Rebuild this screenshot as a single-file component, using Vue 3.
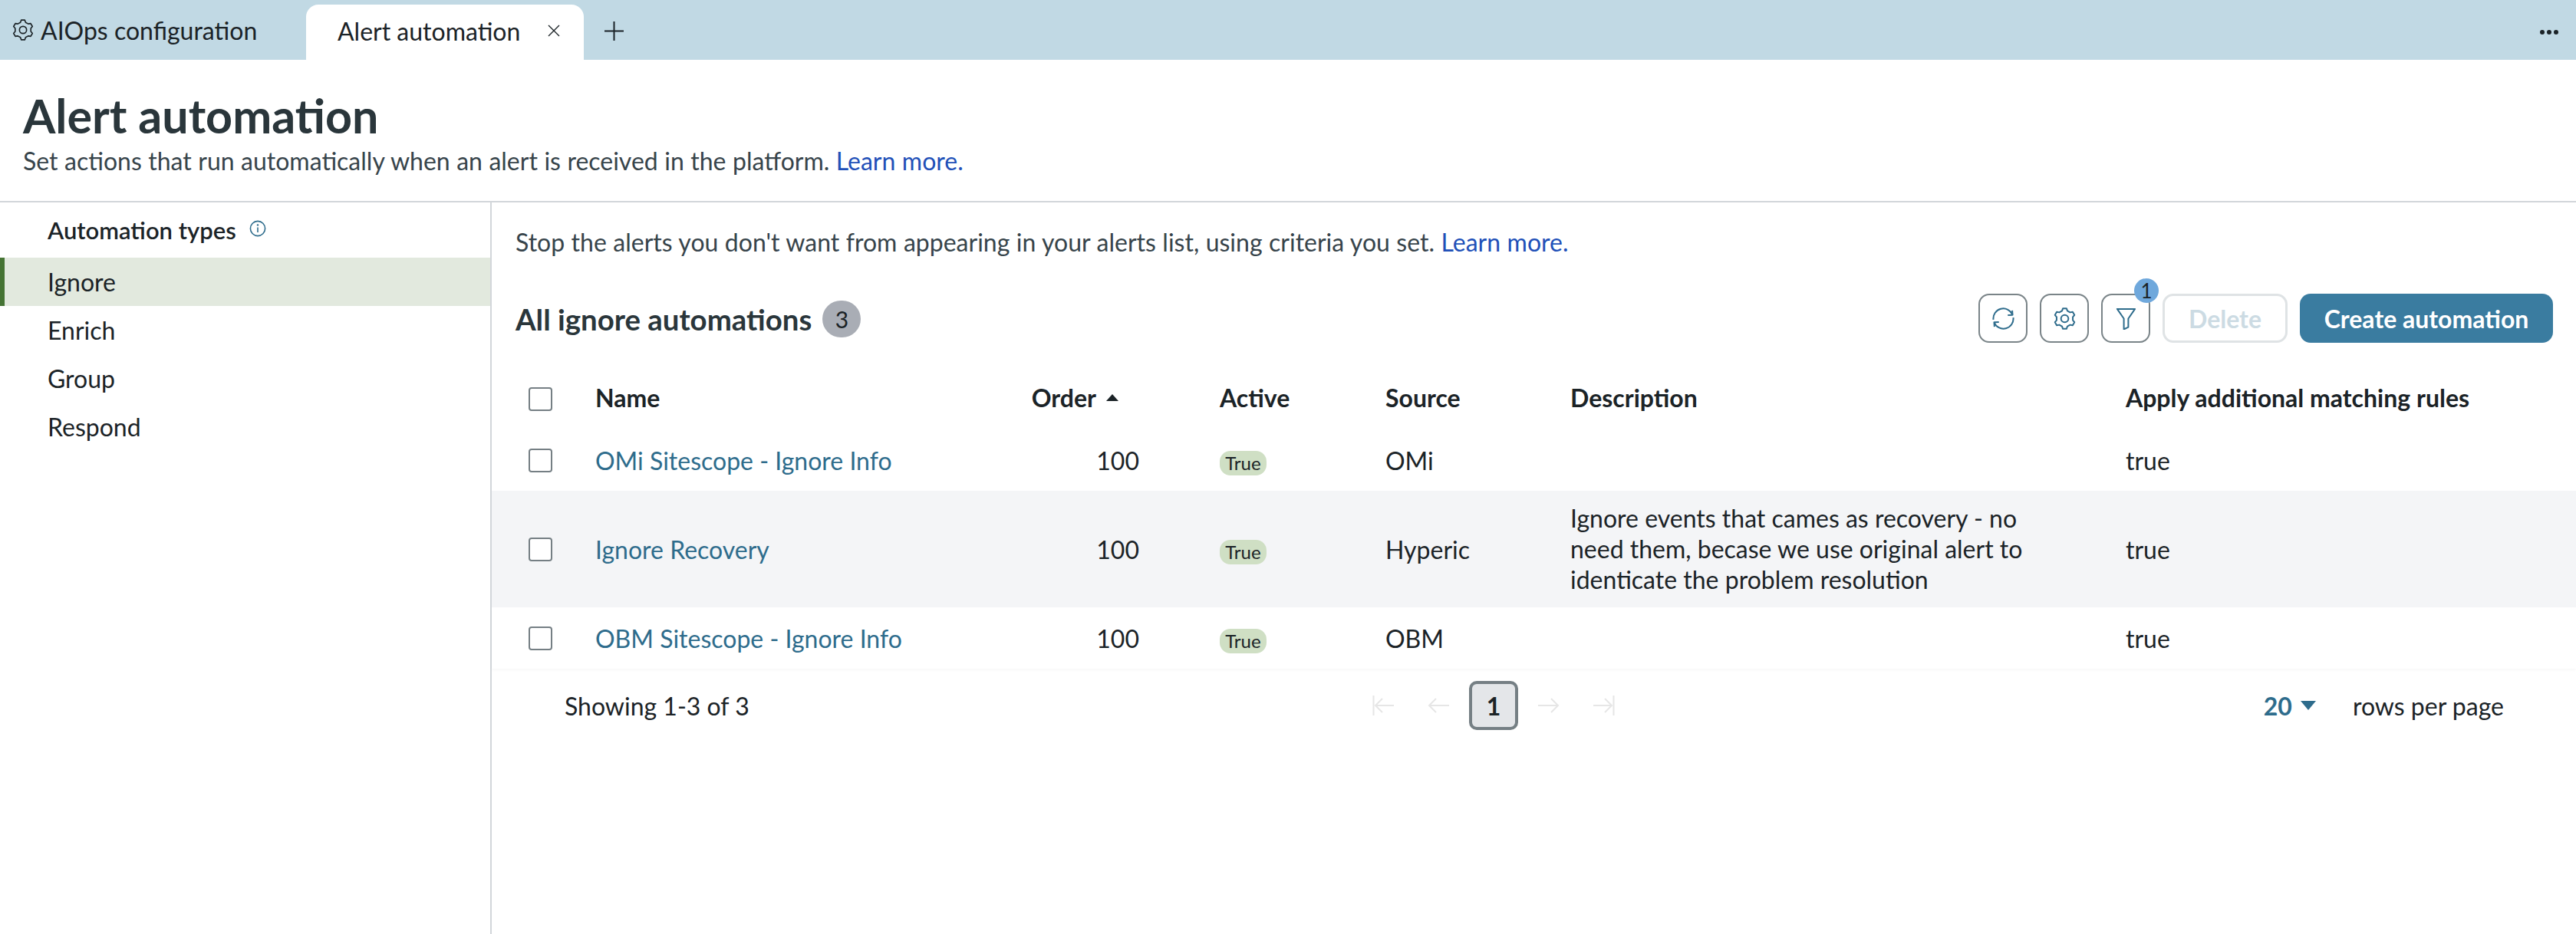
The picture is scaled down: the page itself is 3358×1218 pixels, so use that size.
<script setup>
const rows = [
  { name: 'OMi Sitescope - Ignore Info', source: 'OMi', desc: '' },
  { name: 'Ignore Recovery', source: 'Hyperic', desc: 'Ignore events that cames as recovery - no need them, becase we use original alert to identicate the problem resolution' },
  { name: 'OBM Sitescope - Ignore Info', source: 'OBM', desc: '' },
]
const types = ['Ignore', 'Enrich', 'Group', 'Respond']

function buildGear() {
  const pt = (deg, r) => {
    const a = (deg * Math.PI) / 180
    return (12 + r * Math.cos(a)).toFixed(2) + ' ' + (12 + r * Math.sin(a)).toFixed(2)
  }
  const parts = []
  for (let k = 0; k < 6; k++) {
    const c = k * 60 - 90
    parts.push(pt(c - 19, 8.9), pt(c - 10, 11.2), pt(c + 10, 11.2), pt(c + 19, 8.9))
  }
  return 'M' + parts.join('L') + 'Z'
}
const gear = buildGear()
</script>

<template>
  <div class="app">
    <div class="tabbar">
      <div class="home-tab">
        <svg class="tab-gear" viewBox="0 0 24 24"><path :d="gear" /><circle cx="12" cy="12" r="4" /></svg>
        <span>AIOps configuration</span>
      </div>
      <div class="tab">
        <span>Alert automation</span>
        <svg class="close" viewBox="0 0 18 18"><path d="M2 2l14 14M16 2L2 16" /></svg>
      </div>
      <svg class="plus" viewBox="0 0 25 25"><path d="M12.5 0v25M0 12.5h25" /></svg>
      <div class="dots"><i></i><i></i><i></i></div>
    </div>

    <header class="page-head">
      <h1>Alert automation</h1>
      <p>Set actions that run automatically when an alert is received in the platform. <a>Learn more.</a></p>
    </header>

    <div class="body">
      <aside class="side">
        <div class="side-title">
          <span>Automation types</span>
          <svg class="info" viewBox="0 0 22 22"><circle cx="11" cy="11" r="9.6" /><path d="M11 9.5v6.5" /><circle class="dot" cx="11" cy="6.4" r="1.2" /></svg>
        </div>
        <div v-for="(t, i) in types" :key="t" class="side-item" :class="{ active: i === 0 }">{{ t }}</div>
      </aside>

      <main class="main">
        <p class="intro">Stop the alerts you don't want from appearing in your alerts list, using criteria you set. <a>Learn more.</a></p>

        <div class="toolbar">
          <div class="heading">
            <h2>All ignore automations</h2>
            <span class="count">3</span>
          </div>
          <div class="actions">
            <button class="icon-btn">
              <svg viewBox="0 0 30 30"><path d="M1.6 16.500A13.400 13.400 0 0 1 27.400 10M28.400 13.500A13.400 13.400 0 0 1 2.600 20" /><path d="M27 4l.4 6-6.400.4M3 26l-.4-6 6.400-.4" /></svg>
            </button>
            <button class="icon-btn">
              <svg viewBox="0 0 24 24"><path :d="gear" /><circle cx="12" cy="12" r="4" /></svg>
            </button>
            <button class="icon-btn filter">
              <svg viewBox="0 0 28 30"><path d="M2 2h24L17 15v11.500l-6 3V15z" /></svg>
              <span class="badge">1</span>
            </button>
            <button class="delete">Delete</button>
            <button class="create">Create automation</button>
          </div>
        </div>

        <div class="table">
          <div class="row head">
            <div><span class="check"></span></div>
            <div>Name</div>
            <div class="order-head"><span>Order</span><i class="sort"></i></div>
            <div class="active-cell">Active</div>
            <div>Source</div>
            <div>Description</div>
            <div>Apply additional matching rules</div>
          </div>
          <div v-for="r in rows" :key="r.name" class="row">
            <div><span class="check"></span></div>
            <div class="link">{{ r.name }}</div>
            <div class="num">100</div>
            <div class="active-cell"><span class="pill">True</span></div>
            <div>{{ r.source }}</div>
            <div class="desc">{{ r.desc }}</div>
            <div>true</div>
          </div>
        </div>

        <div class="footer">
          <span class="showing">Showing 1-3 of 3</span>
          <div class="pager">
            <svg viewBox="0 0 28 26"><path d="M1.5 0v26M28 13H4M13 4l-9 9 9 9" /></svg>
            <svg viewBox="0 0 28 26"><path d="M28 13H2M11 4l-9 9 9 9" /></svg>
            <span class="page">1</span>
            <svg viewBox="0 0 28 26"><path d="M0 13h26M17 4l9 9-9 9" /></svg>
            <svg viewBox="0 0 28 26"><path d="M26.500 0v26M0 13h24M15 4l9 9-9 9" /></svg>
          </div>
          <div class="per-page">
            <span class="size">20<i></i></span>
            <span>rows per page</span>
          </div>
        </div>
      </main>
    </div>
  </div>
</template>

<style scoped>
.app {
  width: 3358px;
  height: 1218px;
  overflow: hidden;
  background: #fff;
  font-family: Lato, "Noto Sans", sans-serif;
  font-size: 32px;
  color: #1b2327;
  display: flex;
  flex-direction: column;
}
a { color: #2150b8; }

.tabbar {
  height: 78px;
  flex: none;
  background: #c1d9e4;
  display: flex;
  align-items: flex-end;
}
.home-tab {
  width: 399px;
  height: 78px;
  flex: none;
  display: flex;
  align-items: center;
  padding-left: 16px;
  gap: 9px;
  box-sizing: border-box;
}
.tab-gear { width: 28px; height: 28px; fill: none; stroke: #1b2327; stroke-width: 1.4; stroke-linejoin: round; }
.tab {
  width: 362px;
  height: 72px;
  flex: none;
  box-sizing: border-box;
  background: #fff;
  border-radius: 16px 16px 0 0;
  display: flex;
  align-items: center;
  padding: 0 30px 4px 41px;
  justify-content: space-between;
}
.close { width: 18px; height: 18px; fill: none; stroke: #1b2327; stroke-width: 1.4; }
.plus { width: 25px; height: 25px; margin: 0 0 25px 27px; fill: none; stroke: #1b2327; stroke-width: 2; }
.dots { margin: 0 23px 33px auto; display: flex; gap: 3px; }
.dots i { width: 6px; height: 6px; border-radius: 50%; background: #1b2327; }

.page-head {
  height: 186px;
  flex: none;
  box-sizing: border-box;
  padding: 33px 30px 0;
  border-bottom: 2px solid #d2d6da;
  color: #2a363b;
}
.page-head h1 { margin: 0; font-size: 61px; line-height: 80px; font-weight: 700; }
.page-head p { margin: 0; line-height: 38px; color: #37444b; word-spacing: 0.3px; }

.body { flex: 1; display: flex; min-height: 0; }
.side { width: 641px; flex: none; box-sizing: border-box; border-right: 2px solid #d2d6da; }
.side-title {
  height: 72px;
  display: flex;
  align-items: center;
  padding-left: 62px;
  gap: 17px;
  font-size: 31px;
  font-weight: 600;
  color: #1b2327;
}
.info { width: 22px; height: 22px; margin-top: -4px; fill: none; stroke: #2e6c8c; stroke-width: 1.6; }
.info .dot { fill: #2e6c8c; stroke: none; }
.side-item {
  height: 63px;
  line-height: 63px;
  padding-left: 62px;
  color: #1b2327;
}
.side-item.active {
  background: #e2e9de;
  box-shadow: inset 6px 0 0 #457434;
}

.main { flex: 1; min-width: 0; }
.intro { margin: 0; padding: 33px 0 0 31px; line-height: 38px; color: #37444b; word-spacing: 0.3px; }
.toolbar {
  margin-top: 48px;
  padding: 0 30px 0 31px;
  height: 64px;
  display: flex;
  align-items: center;
  justify-content: space-between;
}
.heading { display: flex; align-items: center; gap: 14px; margin-top: 2px; }
.heading h2 { margin: 0; font-size: 38.4px; font-weight: 700; color: #2a363b; }
.count {
  width: 50px;
  height: 48px;
  border-radius: 24px;
  background: #a9adb5;
  display: flex;
  align-items: center;
  justify-content: center;
  font-size: 30px;
}
.actions { display: flex; gap: 16px; }
button {
  font-family: inherit;
  font-size: 32px;
  height: 64px;
  box-sizing: border-box;
  border-radius: 14px;
  padding: 0;
}
.icon-btn {
  width: 64px;
  background: #fff;
  border: 2.5px solid #7a8488;
  position: relative;
  display: flex;
  align-items: center;
  justify-content: center;
}
.icon-btn svg { width: 29px; height: 29px; fill: none; stroke: #2e6c8c; stroke-width: 2; stroke-linejoin: round; }
.icon-btn svg * { vector-effect: non-scaling-stroke; }
.badge {
  position: absolute;
  top: -22px;
  right: -13px;
  width: 32px;
  height: 32px;
  border-radius: 50%;
  background: #6fa8dc;
  color: #1b2327;
  font-size: 26px;
  line-height: 32px;
  text-align: center;
}
.delete {
  width: 163px;
  background: #fff;
  border: 3px solid #dfe3e5;
  color: #ccdbe3;
  font-weight: 700;
}
.create {
  width: 330px;
  background: #3a7ca0;
  border: 0;
  color: #fff;
  font-weight: 700;
}

.table { margin-top: 33px; }
.row {
  display: grid;
  grid-template-columns: 135px 501px 208px 321px 241px 724px 1fr;
  align-items: center;
  min-height: 80px;
}
.row > div:first-child { padding-left: 48px; display: flex; }
.row:nth-child(3) { background: #f4f5f7; min-height: 152px; }
.row:last-child { box-shadow: 0 2px 3px rgba(0, 0, 0, 0.03); }
.head { font-weight: 700; }
.head > div:not(:first-child) { margin-top: -3px; }
.check {
  width: 31px;
  height: 31px;
  box-sizing: border-box;
  background: #fff;
  border: 2px solid #757f84;
  border-radius: 4px;
}
.link { color: #2e6c8c; }
.num { text-align: right; }
.order-head { display: flex; justify-content: flex-end; align-items: center; padding-right: 27px; gap: 13px; }
.sort { width: 0; height: 0; border: 8px solid transparent; border-top: 0; border-bottom: 9px solid #1b2327; }
.active-cell { padding-left: 105px; }
.pill {
  display: inline-block;
  width: 61px;
  height: 32px;
  margin-top: 6px;
  border-radius: 14px;
  background: #cfdfc4;
  font-size: 24px;
  line-height: 32px;
  text-align: center;
}
.desc { line-height: 40px; padding-right: 104px; }

.footer {
  height: 96px;
  display: flex;
  align-items: center;
  padding: 0 94px 0 95px;
}
.showing { width: 1053px; flex: none; }
.pager { display: flex; align-items: center; gap: 44px; }
.pager svg { width: 28px; height: 26px; fill: none; stroke: #e6e6e6; stroke-width: 2; margin: 0; }
.page {
  width: 64px;
  height: 64px;
  margin: 0 -18px;
  box-sizing: border-box;
  border: 4px solid #757f84;
  border-radius: 10px;
  background: #e4e6e9;
  font-weight: 700;
  display: flex;
  align-items: center;
  justify-content: center;
}
.per-page { margin-left: auto; display: flex; align-items: center; gap: 48px; }
.size { color: #2e6c8c; font-weight: 700; display: flex; align-items: center; gap: 11px; }
.size i { width: 0; height: 0; border: 10px solid transparent; border-bottom: 0; border-top: 12px solid #2e6c8c; }
</style>
